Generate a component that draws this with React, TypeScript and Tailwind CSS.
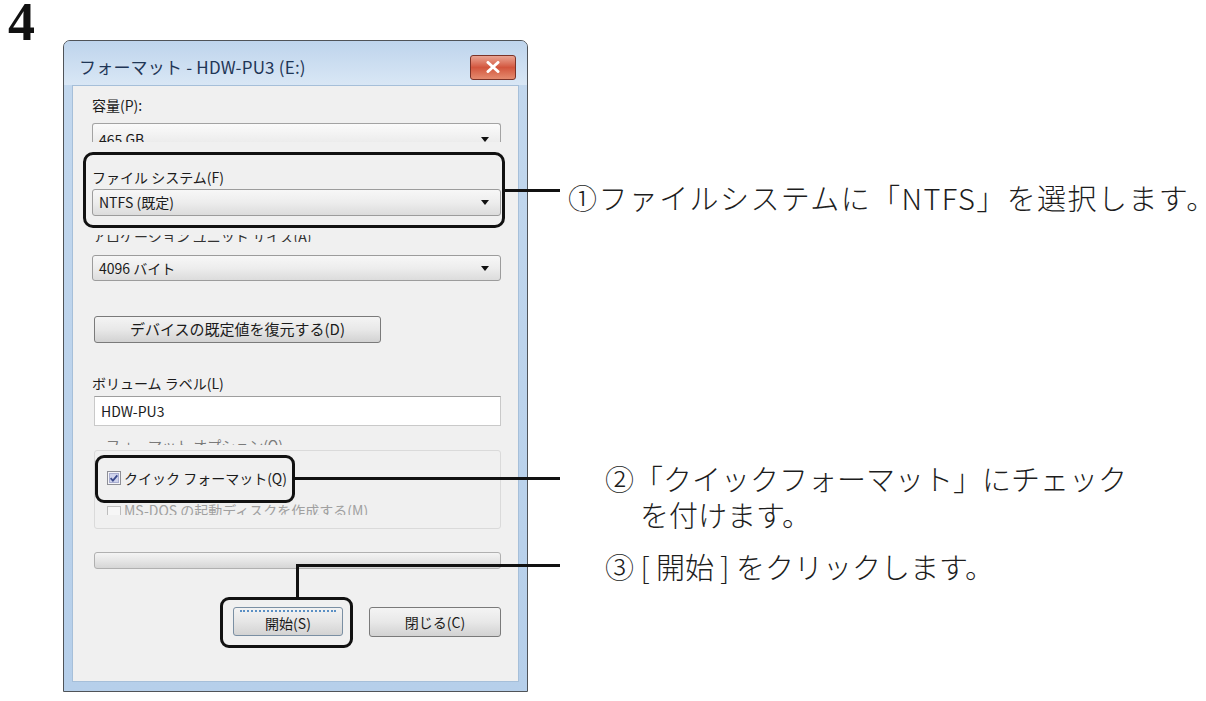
import React from 'react';

// Small black down-pointing arrow used on combo boxes
function DropArrow() {
  return (
    <svg width="8" height="5" viewBox="0 0 8 5" className="shrink-0">
      <path d="M0 0h8L4 5z" fill="#111" />
    </svg>
  );
}

function Combo({ value, className = '' }: { value: string; className?: string }) {
  return (
    <div
      className={`flex items-center justify-between pl-[6px] pr-[11px] border border-[#9c9c9c] rounded-[3px] bg-linear-to-b from-[#f7f7f7] via-[#ededed] to-[#dcdcdc] text-[14px] text-[#1b1b1b] ${className}`}
    >
      <span>{value}</span>
      <DropArrow />
    </div>
  );
}

function WinButton({ label, className = '' }: { label: string; className?: string }) {
  return (
    <div
      className={`flex items-center justify-center border border-[#7a7a7a] rounded-[3px] bg-linear-to-b from-[#f4f4f4] via-[#e8e8e8] to-[#d2d2d2] text-[14px] text-[#1b1b1b] ${className}`}
    >
      {label}
    </div>
  );
}

function CheckedBox() {
  return (
    <svg width="14" height="14" viewBox="0 0 14 14" className="shrink-0">
      <rect x="0.5" y="0.5" width="13" height="13" fill="#f4f4f8" stroke="#8e8f96" />
      <rect x="2.5" y="2.5" width="9" height="9" fill="#cfd3ec" stroke="#a9aed0" />
      <path d="M3.6 7.2l2.3 2.4 4.4-5.2" fill="none" stroke="#3b4a8c" strokeWidth="1.8" />
    </svg>
  );
}

function EmptyBox() {
  return (
    <svg width="14" height="14" viewBox="0 0 14 14" className="shrink-0">
      <rect x="0.5" y="0.5" width="13" height="13" fill="#f6f6f6" stroke="#bdbdbd" />
    </svg>
  );
}

function FormatDialog() {
  return (
    <div className="w-[465px] h-[652px] flex flex-col border border-[#4f5358] rounded-t-[7px] bg-linear-to-b from-[#c3d8ee] to-[#b6cfea] font-['Noto_Sans_CJK_JP','Noto_Sans',sans-serif]">
      {/* title bar */}
      <div className="h-[44px] pt-[8px] pl-[15px] pr-[11px] flex items-center justify-between bg-linear-to-b from-[#bed4ec] to-[#d9e7f5] rounded-t-[6px]">
        <span className="text-[17px] text-[#1f3656] tracking-[0.2px]">フォーマット - HDW-PU3 (E:)</span>
        <div className="w-[46px] h-[25px] flex items-center justify-center rounded-[3px] border border-[#7b3328] bg-linear-to-b from-[#e9a493] via-[#d2553d] to-[#e48b6f]">
          <svg width="14" height="12" viewBox="0 0 14 12">
            <path d="M2 1.5l10 9M12 1.5l-10 9" stroke="#fff" strokeWidth="3" strokeLinecap="round" />
          </svg>
        </div>
      </div>

      {/* client area */}
      <div className="flex-1 mx-[8px] mb-[9px] bg-[#f0f0f0] border border-[#a6bfd9] pl-[19px] pr-[17px] flex flex-col text-[14px] text-[#1b1b1b]">
        <div className="mt-[10px] leading-[18px]">容量(P):</div>

        {/* capacity combo, lower half hidden by the scan */}
        <div className="mt-[9px] h-[19px] overflow-hidden border border-b-0 border-[#a3a3a3] rounded-t-[3px] bg-linear-to-b from-[#fbfbfb] to-[#ececec] flex items-start justify-between pl-[6px] pr-[11px]">
          <span className="leading-[30px] text-[14px]">465 GB</span>
          <span className="mt-[13px]"><DropArrow /></span>
        </div>

        <div className="mt-[26px] leading-[18px]">ファイル システム(F)</div>
        <Combo value="NTFS (既定)" className="mt-[3px] h-[27px]" />

        {/* allocation label, only the bottom strip is visible */}
        <div className="mt-[19px] h-[7px] overflow-hidden flex items-end text-[#333]">
          <span className="leading-[18px] -mb-[3px]">アロケーション ユニット サイズ(A)</span>
        </div>
        <Combo value="4096 バイト" className="mt-[13px] h-[26px]" />

        <WinButton label="デバイスの既定値を復元する(D)" className="mt-[35px] ml-[2px] w-[287px] h-[27px] text-[15px]" />

        <div className="mt-[31px] leading-[18px]">ボリューム ラベル(L)</div>
        <div className="mt-[4px] ml-[2px] h-[30px] bg-white border border-[#c9c9c9] border-t-[#9e9e9e] flex items-center pl-[6px]">
          HDW-PU3
        </div>

        {/* group caption, only its top strip shows */}
        <div className="mt-[11px] ml-[14px] h-[8px] overflow-hidden text-[#7a7a7a]">
          <span className="block leading-[18px] -mt-[1px]">フォーマット オプション(O)</span>
        </div>

        <div className="mt-[5px] ml-[2px] h-[79px] border border-[#dadada] rounded-[3px] flex flex-col pl-[12px]">
          <div className="mt-[18px] flex items-center gap-[3px] leading-[18px]">
            <CheckedBox />
            <span>クイック フォーマット(Q)</span>
          </div>
          <div className="mt-[17px] h-[11px] overflow-hidden flex items-end gap-[3px] text-[#a0a0a0]">
            <span className="-mb-[5px]"><EmptyBox /></span>
            <span className="leading-[18px] -mb-[4px]">MS-DOS の起動ディスクを作成する(M)</span>
          </div>
        </div>

        {/* progress bar */}
        <div className="mt-[23px] ml-[2px] h-[17px] rounded-[3px] border border-[#b0b0b0] bg-linear-to-b from-[#f4f4f4] via-[#e6e6e6] to-[#d6d6d6]" />

        <div className="mt-[38px] flex justify-end gap-[26px]">
          <div className="w-[110px] h-[29px] border border-[#7a8fa3] rounded-[3px] bg-linear-to-b from-[#f3f3f3] via-[#e6e6e6] to-[#d3d3d3] flex flex-col items-center">
            <div className="mt-[2px] w-[96px] border-t-2 border-dotted border-[#5a8fc4]" />
            <span className="leading-[22px] text-[14px]">開始(S)</span>
          </div>
          <WinButton label="閉じる(C)" className="w-[132px] h-[30px]" />
        </div>
      </div>
    </div>
  );
}

export default function App() {
  return (
    <div className="relative w-[1206px] h-[701px] bg-white overflow-hidden flex">
      {/* step number and dialog */}
      <div className="w-[540px] shrink-0 flex flex-col">
        <div className="h-[40px] pl-[8px] pt-[4px] text-[54px] leading-[37px] font-bold text-[#111] font-['Liberation_Serif',serif]">4</div>
        <div className="ml-[63px]">
          <FormatDialog />
        </div>
      </div>

      {/* step notes */}
      <div className="pl-[28px] flex flex-col text-[29px] font-light text-[#1d1d1d] font-['Noto_Sans_CJK_JP','Noto_Sans',sans-serif]">
        <div className="mt-[177px] leading-[40px] tracking-[1.4px] whitespace-nowrap">①ファイルシステムに「NTFS」を選択します。</div>
        <div className="mt-[243px] ml-[37px] leading-[36px] whitespace-nowrap">
          <div>②「クイックフォーマット」にチェック</div>
          <div className="ml-[35px]">を付けます。</div>
        </div>
        <div className="mt-[16px] ml-[37px] leading-[36px] whitespace-nowrap">③ [ 開始 ] をクリックします。</div>
      </div>

      {/* callout frames and leader lines */}
      <div className="absolute left-[83px] top-[152px] w-[422px] h-[76px] border-[3px] border-[#111] rounded-[10px]" />
      <div className="absolute left-[505px] top-[189px] w-[55px] h-[3px] bg-[#111]" />

      <div className="absolute left-[95px] top-[455px] w-[200px] h-[48px] border-[3px] border-[#111] rounded-[9px]" />
      <div className="absolute left-[295px] top-[477px] w-[265px] h-[3px] bg-[#111]" />

      <div className="absolute left-[296px] top-[564px] w-[264px] h-[3px] bg-[#111]" />
      <div className="absolute left-[296px] top-[564px] w-[3px] h-[34px] bg-[#111]" />
      <div className="absolute left-[220px] top-[597px] w-[133px] h-[51px] border-[3px] border-[#111] rounded-[9px]" />
    </div>
  );
}
